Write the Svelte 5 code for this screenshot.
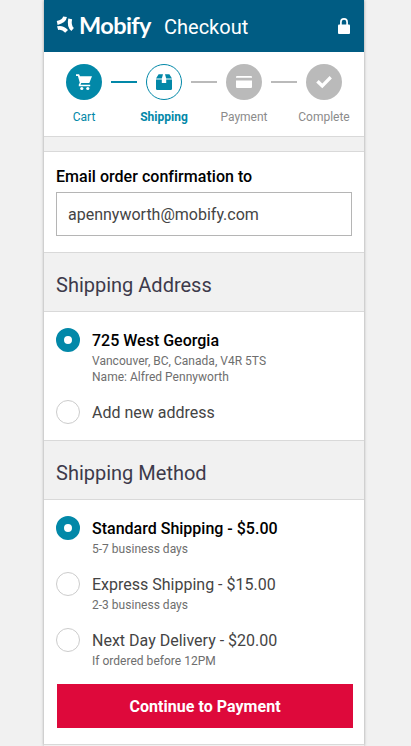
<script>
  const steps = [
    { label: 'Cart', icon: 'cart', state: 'done' },
    { label: 'Shipping', icon: 'box', state: 'current' },
    { label: 'Payment', icon: 'card', state: 'todo' },
    { label: 'Complete', icon: 'check', state: 'todo' }
  ];
  const addresses = [
    { title: '725 West Georgia', lines: ['Vancouver, BC, Canada, V4R 5TS', 'Name: Alfred Pennyworth'] },
    { title: 'Add new address', lines: [] }
  ];
  const methods = [
    { title: 'Standard Shipping - $5.00', lines: ['5-7 business days'] },
    { title: 'Express Shipping - $15.00', lines: ['2-3 business days'] },
    { title: 'Next Day Delivery - $20.00', lines: ['If ordered before 12PM'] }
  ];
  let address = $state(0);
  let method = $state(0);
</script>

{#snippet option(item, selected, choose)}
  <button class="option" class:selected role="radio" aria-checked={selected} onclick={choose}>
    <span class="radio"></span>
    <span class="copy">
      <span class="title">{item.title}</span>
      {#each item.lines as line}<span class="line">{line}</span>{/each}
    </span>
  </button>
{/snippet}

<div class="page">
  <header>
    <svg class="mark" width="19" height="18" viewBox="0 0 19 18" fill="none" stroke="#fff" stroke-width="3.9">
      <path d="M9 .8Q8.3 5.4 1.2 7" />
      <path d="M1.6 12.2Q6.2 10.8 10.6 15.4" />
      <path d="M16.6 13.4Q12.6 10 14.2 2.8" />
    </svg>
    <span class="brand">Mobify</span>
    <span class="where">Checkout</span>
    <svg class="lock" width="12" height="16" viewBox="0 0 12 16">
      <path d="M2.9 7V4a3.1 3.1 0 0 1 6.2 0v3" fill="none" stroke="#fff" stroke-width="1.7" />
      <rect y="6.5" width="12" height="9.5" rx="1" fill="#fff" />
    </svg>
  </header>

  <nav>
    <div class="track">
      {#each steps as step, i}
        {#if i > 0}<span class="link" class:done={i === 1}></span>{/if}
        <span class="dot {step.state}">
          <svg width="18" height="18" viewBox="0 0 18 18" fill="currentColor">
            {#if step.icon === 'cart'}
              <path d="M1 1.2h3.1l.9 2h12L14.3 10H6.2l-.7 1.7h9.7v1.5H3.8v-1.6l1-1.8L2.9 2.9H1z" />
              <circle cx="6.8" cy="15.5" r="1.6" />
              <circle cx="12.8" cy="15.5" r="1.6" />
            {:else if step.icon === 'box'}
              <path d="M3.6 1.2H8L6.8 5.5H1zM10 1.2h4.4L17 5.5h-5.8z" />
              <path d="M1 6.5h5.8V10h4.4V6.5H17v9.2q0 1.3-1.3 1.3H2.3Q1 17 1 15.7z" />
            {:else if step.icon === 'card'}
              <path d="M2 3h14q1 0 1 1v.8H1V4q0-1 1-1zM1 7.4h16V14q0 1-1 1H2q-1 0-1-1z" />
            {:else}
              <path d="m1.2 9.5 2.5-2.4 3.6 3.4L14.6 3l2.3 2.4-9.6 9.8z" />
            {/if}
          </svg>
        </span>
      {/each}
    </div>
    <div class="labels">
      {#each steps as step}<span class={step.state} class:active={step.state !== 'todo'}>{step.label}</span>{/each}
    </div>
  </nav>

  <section class="email">
    <label for="email">Email order confirmation to</label>
    <input id="email" type="text" value="apennyworth@mobify.com" />
  </section>

  <h2>Shipping Address</h2>
  <section class="addresses" role="radiogroup" aria-label="Shipping Address">
    {#each addresses as item, i}{@render option(item, address === i, () => (address = i))}{/each}
  </section>

  <h2>Shipping Method</h2>
  <section class="methods" role="radiogroup" aria-label="Shipping Method">
    {#each methods as item, i}{@render option(item, method === i, () => (method = i))}{/each}
    <button class="continue">Continue to Payment</button>
  </section>
</div>

<style>
  :global(body) { background: #f1f1f1; overflow: hidden; }
  .page {
    box-sizing: border-box;
    width: 320px;
    height: 746px;
    margin-left: 44px;
    overflow: hidden;
    background: #f1f1f1;
    box-shadow: 0 0 3px rgba(0, 0, 0, 0.35);
    font-family: Roboto, sans-serif;
    color: #444;
  }
  header {
    box-sizing: border-box;
    display: flex;
    align-items: center;
    height: 52px;
    padding: 0 14px 0 12px;
    background: #005c83;
    color: #fff;
  }
  .mark { flex: none; margin-top: -2px; }
  .brand {
    width: 72px;
    margin: -2px 12px 0 4px;
    font: 700 23.5px/30px Lato, sans-serif;
    letter-spacing: -0.6px;
  }
  .where { font-size: 20px; line-height: 24px; margin: 2px 0 0 1px; }
  .lock { margin-left: auto; }
  nav {
    box-sizing: border-box;
    height: 85px;
    padding-top: 12px;
    background: #fff;
    border-bottom: 1px solid #d9d9d9;
  }
  .track { display: flex; align-items: center; padding-left: 22px; }
  .link { width: 26px; height: 2px; margin: 0 9px; background: #bababa; }
  .link.done { background: #0288a8; }
  .dot {
    box-sizing: border-box;
    display: flex;
    align-items: center;
    justify-content: center;
    width: 36px;
    height: 36px;
    border-radius: 50%;
    color: #fff;
    background: #bababa;
  }
  .dot.done { background: #0288a8; }
  .dot.current { background: #fff; color: #0288a8; border: 1px solid #0288a8; }
  .labels {
    display: grid;
    grid-template-columns: repeat(4, 80px);
    margin-top: 9px;
    text-align: center;
    font-size: 12px;
    line-height: 16px;
    color: #8b8b8b;
  }
  .labels .active { color: #0288a8; }
  .labels .current { font-weight: 700; }
  .email {
    box-sizing: border-box;
    height: 102px;
    margin-top: 14px;
    padding: 15px 12px 0;
    background: #fff;
    border: solid #d9d9d9;
    border-width: 1px 0;
  }
  label {
    display: block;
    font-size: 16px;
    line-height: 20px;
    font-weight: 500;
    letter-spacing: 0.03px;
    color: #000;
  }
  input {
    box-sizing: border-box;
    display: block;
    width: 296px;
    height: 44px;
    margin-top: 5px;
    padding: 0 11px;
    border: 1px solid #b5b5b5;
    border-radius: 0;
    background: #fff;
    font: 16px Roboto, sans-serif;
    color: #444;
    outline: none;
  }
  h2 {
    height: 58px;
    margin: 0;
    padding: 3px 12px 0;
    box-sizing: border-box;
    font-size: 20px;
    line-height: 59px;
    font-weight: 400;
    color: #3d3a4b;
  }
  .addresses, .methods {
    box-sizing: border-box;
    display: flex;
    flex-direction: column;
    padding: 16px 12px 0;
    background: #fff;
    border: solid #d9d9d9;
    border-width: 1px 0;
  }
  .addresses { height: 130px; gap: 15px; }
  .methods { height: 246px; gap: 15px; }
  .option {
    display: flex;
    gap: 12px;
    padding: 0;
    border: 0;
    background: none;
    font: 16px/24px Roboto, sans-serif;
    color: #444;
    text-align: left;
  }
  .radio {
    box-sizing: border-box;
    flex: none;
    width: 24px;
    height: 24px;
    border: 1px solid #ccc;
    border-radius: 50%;
    background: #fff;
  }
  .selected .radio { border: 8px solid #0288a8; }
  .copy { display: flex; flex-direction: column; padding-top: 1px; }
  .title { height: 24px; white-space: nowrap; }
  .selected .title { font-weight: 500; color: #000; }
  .line { font-size: 12px; line-height: 16px; letter-spacing: 0.02px; color: #6e6e6e; }
  .continue {
    align-self: flex-start;
    width: 296px;
    height: 44px;
    margin-left: 1px;
    padding: 0;
    border: 0;
    background: #de093b;
    color: #fff;
    font: 700 16px Roboto, sans-serif;
    letter-spacing: 0.04px;
  }
</style>
